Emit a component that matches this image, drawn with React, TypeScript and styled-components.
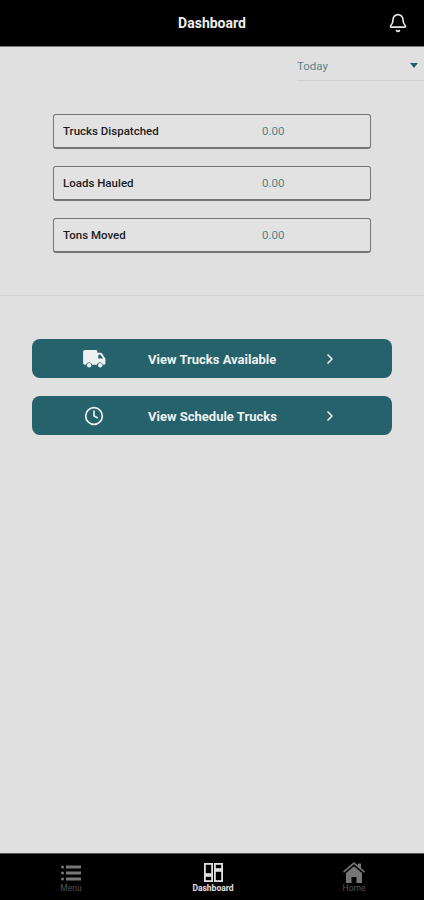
import React from 'react';
import styled, { createGlobalStyle } from 'styled-components';
import { Bell, ChevronRight, Clock } from 'lucide-react';

const GlobalStyle = createGlobalStyle`
  html, body {
    margin: 0;
    padding: 0;
    background: #e0e0e0;
    font-family: Roboto, "Liberation Sans", sans-serif;
  }
  * {
    box-sizing: border-box;
  }
`;

const stats = [
  { label: 'Trucks Dispatched', value: '0.00' },
  { label: 'Loads Hauled', value: '0.00' },
  { label: 'Tons Moved', value: '0.00' },
];

const TruckIcon = () => (
  <svg width="23" height="19" viewBox="0 0 24 20" fill="#eef1f1">
    <path d="M2 0h11.5a1.5 1.5 0 0 1 1.5 1.5V3h3.6c.6 0 1.1.3 1.4.7l3.2 5c.2.3.3.6.3 1V14c0 .8-.6 1.5-1.5 1.5h-1.1a3.2 3.2 0 0 0-6.3 0H9.4a3.2 3.2 0 0 0-6.3 0H1.8C.8 15.500 0 14.700 0 13.800V2C0 .9.900 0 2 0z" />
    <path fill="#26626c" d="M16 5h2.400l2.500 4H16z" />
    <circle cx="6.300" cy="16" r="2.300" />
    <circle cx="18" cy="16" r="2.300" />
  </svg>
);

const MenuIcon = () => (
  <svg width="20" height="16" viewBox="0 0 20 16" fill="#767676">
    <circle cx="1.500" cy="2" r="1.500" />
    <circle cx="1.500" cy="8" r="1.500" />
    <circle cx="1.500" cy="14" r="1.500" />
    <rect x="5" y="0.500" width="15" height="3" />
    <rect x="5" y="6.500" width="15" height="3" />
    <rect x="5" y="12.500" width="15" height="3" />
  </svg>
);

const DashboardIcon = () => (
  <svg width="19" height="19" viewBox="0 0 19 19" fill="none" stroke="#e0e0e0" strokeWidth="1.800">
    <rect x="0.900" y="0.900" width="7.200" height="10.200" />
    <rect x="10.900" y="0.900" width="7.200" height="5.200" />
    <rect x="0.900" y="12.900" width="7.200" height="5.200" />
    <rect x="10.900" y="7.900" width="7.200" height="10.200" />
  </svg>
);

const HomeIcon = () => (
  <svg width="22" height="21" viewBox="0 0 22 21" fill="#767676">
    <path d="M11 0l4 3.400V1.500h3v4.500l4 3.500-1 1.300-10-8.500-10 8.500-1-1.300z" />
    <path d="M3 11l8-6.800 8 6.800v10h-5.500v-6h-5v6H3z" />
  </svg>
);

const App: React.FC = () => {
  return (
    <Page>
      <GlobalStyle />
      <Header>
        <HeaderTitle>Dashboard</HeaderTitle>
        <BellButton>
          <Bell size={20} strokeWidth={2} />
        </BellButton>
      </Header>

      <Content>
        <FilterRow>
          <FilterSelect>
            <span>Today</span>
            <Caret />
          </FilterSelect>
        </FilterRow>

        <StatList>
          {stats.map((stat) => (
            <StatCard key={stat.label}>
              <StatLabel>{stat.label}</StatLabel>
              <StatValue>{stat.value}</StatValue>
            </StatCard>
          ))}
        </StatList>

        <Divider />

        <ActionList>
          <ActionButton>
            <ActionIcon>
              <TruckIcon />
            </ActionIcon>
            <ActionLabel>View Trucks Available</ActionLabel>
            <ActionArrow>
              <ChevronRight size={16} strokeWidth={2.5} />
            </ActionArrow>
          </ActionButton>
          <ActionButton>
            <ActionIcon>
              <Clock size={20} strokeWidth={2} />
            </ActionIcon>
            <ActionLabel>View Schedule Trucks</ActionLabel>
            <ActionArrow>
              <ChevronRight size={16} strokeWidth={2.5} />
            </ActionArrow>
          </ActionButton>
        </ActionList>
      </Content>

      <BottomNav>
        <NavItem>
          <NavIconSlot>
            <MenuIcon />
          </NavIconSlot>
          <NavLabel>Menu</NavLabel>
        </NavItem>
        <NavItem>
          <NavIconSlot>
            <DashboardIcon />
          </NavIconSlot>
          <NavLabel $active>Dashboard</NavLabel>
        </NavItem>
        <NavItem>
          <NavIconSlot>
            <HomeIcon />
          </NavIconSlot>
          <NavLabel>Home</NavLabel>
        </NavItem>
      </BottomNav>
    </Page>
  );
};

export default App;

const Page = styled.div`
  display: flex;
  flex-direction: column;
  width: 424px;
  height: 900px;
  overflow: hidden;
  background: #e0e0e0;
`;

const Header = styled.header`
  position: relative;
  display: flex;
  flex: none;
  align-items: center;
  justify-content: center;
  height: 47px;
  background: #000;
  border-bottom: 1px solid #777;
`;

const HeaderTitle = styled.h1`
  margin: 0;
  color: #eee;
  font-size: 14px;
  font-weight: 700;
`;

const BellButton = styled.div`
  position: absolute;
  top: 13px;
  right: 16px;
  display: flex;
  color: #e6e6e6;
`;

const Content = styled.main`
  flex: 1;
  min-height: 0;
`;

const FilterRow = styled.div`
  display: flex;
  justify-content: flex-end;
`;

const FilterSelect = styled.div`
  display: flex;
  align-items: center;
  justify-content: space-between;
  width: 127px;
  height: 34px;
  padding: 5px 6px 0 0;
  color: #5a8488;
  font-size: 11.5px;
  border-bottom: 1px solid #d0d0d0;
`;

const Caret = styled.span`
  width: 0;
  height: 0;
  margin-bottom: 1px;
  border-top: 5px solid #1f626b;
  border-left: 4.500px solid transparent;
  border-right: 4.500px solid transparent;
`;

const StatList = styled.div`
  display: flex;
  flex-direction: column;
  gap: 17px;
  padding: 33px 53px 0 53px;
`;

const StatCard = styled.div`
  display: flex;
  align-items: center;
  height: 35px;
  padding: 0 9px;
  background: #e2e2e2;
  border: 1px solid #767676;
  border-bottom-width: 2px;
  border-radius: 3px;
`;

const StatLabel = styled.span`
  width: 199px;
  color: #1c1c1c;
  font-size: 11.5px;
  font-weight: 500;
`;

const StatValue = styled.span`
  color: #4f8388;
  font-size: 11.5px;
`;

const Divider = styled.hr`
  margin: 42px 0 0;
  border: 0;
  border-top: 1px solid #d4d4d4;
`;

const ActionList = styled.div`
  display: flex;
  flex-direction: column;
  gap: 18px;
  padding: 43px 32px 0;
`;

const ActionButton = styled.div`
  display: flex;
  align-items: center;
  height: 39px;
  padding-top: 1px;
  color: #eef1f1;
  background: #26626c;
  border-radius: 8px;
`;

const ActionIcon = styled.span`
  display: flex;
  justify-content: center;
  width: 116px;
  padding-left: 8px;
`;

const ActionLabel = styled.span`
  width: 174px;
  font-size: 13px;
  font-weight: 700;
`;

const ActionArrow = styled.span`
  display: flex;
`;

const BottomNav = styled.nav`
  display: grid;
  flex: none;
  grid-template-columns: 142px 142px 140px;
  height: 47px;
  padding-top: 8px;
  background: #000;
  border-top: 1px solid #555;
`;

const NavItem = styled.div`
  display: flex;
  flex-direction: column;
  align-items: center;
`;

const NavIconSlot = styled.span`
  display: flex;
  align-items: center;
  justify-content: center;
  height: 21px;
`;

const NavLabel = styled.span<{ $active?: boolean }>`
  color: ${({ $active }) => ($active ? '#e0e0e0' : '#555')};
  font-size: 8.5px;
  font-weight: ${({ $active }) => ($active ? 700 : 400)};
`;
